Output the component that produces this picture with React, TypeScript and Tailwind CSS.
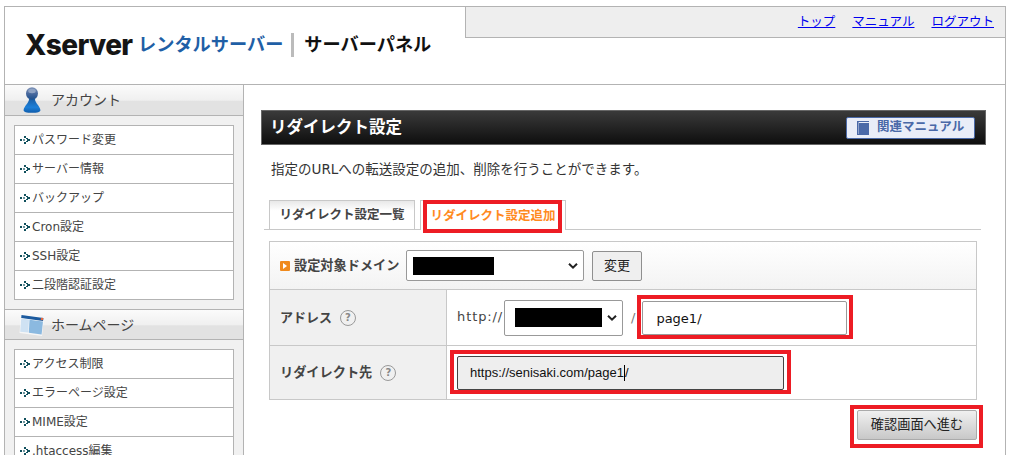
import React from 'react'

const JP = { fontFamily: '"DejaVu Sans", "Noto Sans CJK JP", sans-serif' }

const accountMenu = ['パスワード変更', 'サーバー情報', 'バックアップ', 'Cron設定', 'SSH設定', '二段階認証設定']
const homepageMenu = ['アクセス制限', 'エラーページ設定', 'MIME設定', '.htaccess編集']

function Bullet() {
  return (
    <svg width="11" height="9" viewBox="0 0 11 9" className="shrink-0" shapeRendering="crispEdges">
      <g fill="#0f4f5c">
        <rect x="0" y="3" width="2" height="2" />
        <rect x="3" y="3" width="2" height="2" opacity="0.6" />
        <rect x="4" y="0" width="2" height="2" />
        <rect x="4" y="6" width="2" height="2" />
        <rect x="6" y="2" width="2" height="1" />
        <rect x="6" y="5" width="2" height="1" />
        <rect x="7" y="3" width="3" height="2" />
      </g>
    </svg>
  )
}

function UserIcon() {
  return (
    <svg width="18" height="26" viewBox="0 0 18 26">
      <defs>
        <linearGradient id="userBody" x1="0" y1="0" x2="0" y2="1">
          <stop offset="0" stopColor="#1a5fa8" />
          <stop offset="0.6" stopColor="#1c7fd8" />
          <stop offset="1" stopColor="#0f5cab" />
        </linearGradient>
        <linearGradient id="userHead" x1="0" y1="0" x2="0" y2="1">
          <stop offset="0" stopColor="#7f93b8" />
          <stop offset="0.5" stopColor="#4a6a9e" />
          <stop offset="1" stopColor="#1c4f8c" />
        </linearGradient>
      </defs>
      <path d="M6 12C6 16 1 19 .6 23c-.2 2 3 2.8 8.4 2.8s8.6-.8 8.4-2.8C17 19 12 16 12 12z" fill="url(#userBody)" />
      <ellipse cx="9" cy="6.5" rx="6" ry="6.2" fill="url(#userHead)" />
      <ellipse cx="9" cy="4" rx="3.8" ry="2.2" fill="#8fa3c4" />
    </svg>
  )
}

function WindowIcon() {
  return (
    <svg width="26" height="24" viewBox="0 0 26 24">
      <path d="M2 1.5 25 4.5 23 23 0.5 20z" fill="#fff" opacity="0.7" />
      <path d="M2.5 2 24.5 5 24 8 2.2 5z" fill="#1c5a9e" />
      <circle cx="23" cy="6" r="1.3" fill="#e8663c" />
      <path d="M2.2 5.5 10 6.6 9.2 19.6 1.2 18.8z" fill="#cfe2f3" />
      <path d="M10.5 6.8 24 8.5 22.6 21.6 9.8 19.8z" fill="#8bb9e0" />
    </svg>
  )
}

function BookIcon() {
  return (
    <svg width="13" height="14" viewBox="0 0 13 14" shapeRendering="crispEdges">
      <rect x="0" y="0" width="12" height="14" fill="#4a69a8" />
      <rect x="2" y="1" width="10" height="1" fill="#e9edf8" />
      <rect x="1" y="1" width="1" height="12" fill="#8ea2cb" />
    </svg>
  )
}

function Chevron() {
  return (
    <svg width="10" height="7" viewBox="0 0 10 7" className="absolute top-1/2 right-[5px] -translate-y-1/2">
      <path d="M1 1.2 5 5.2 9 1.2" fill="none" stroke="#222" strokeWidth="2" />
    </svg>
  )
}

function HelpIcon() {
  return (
    <span className="ml-[8px] flex h-4 w-4 items-center justify-center rounded-full border border-[#999] text-[10px] font-bold leading-none text-[#888]">
      ?
    </span>
  )
}

function RedBox({ inset }: { inset: string }) {
  return <span className={`pointer-events-none absolute border-[4px] border-[#ed1c24] ${inset}`} />
}

function SideSection({ title, icon, items, head }: { title: string; icon: React.ReactNode; items: string[]; head: string }) {
  return (
    <div>
      <div className={`flex items-center border-b border-[#b3b3b3] bg-[linear-gradient(#fbfbfb,#f0f0f0_50%,#e2e2e2_55%,#e2e2e2)] ${head}`}>
        <span className="flex w-[46px] shrink-0 justify-center pl-[8px]">{icon}</span>
        <span className="text-[14px] text-[#444]">{title}</span>
      </div>
      <div className="p-[9px]">
        <ul className="border border-b-0 border-[#b3b3b3] bg-white">
          {items.map((item) => (
            <li key={item} className="flex h-[29px] items-center gap-[1px] border-b border-[#b3b3b3] pl-[5px] text-[12px] text-[#444]">
              <Bullet />
              {item}
            </li>
          ))}
        </ul>
      </div>
    </div>
  )
}

export default function App() {
  return (
    <div className="h-[455px] w-[1013px] overflow-hidden bg-white pt-[6px] pl-[4px]" style={JP}>
      <div className="w-[1002px] border-x border-t border-[#b3b3b3]">
        {/* ヘッダー */}
        <header className="flex h-[78px] border-b border-[#b3b3b3]">
          <div className="flex flex-1 items-center pb-[1px] pl-[20px]">
            <span className="mr-[3px] w-[110px] font-['Inter',sans-serif] text-[28px] leading-none font-extrabold tracking-[-0.6px] text-[#151515]">
              Xserver
            </span>
            <span className="text-[18.2px] leading-none font-bold text-[#1f5fa6]">レンタルサーバー</span>
            <span className="mx-[8px] h-[24px] w-[3px] bg-[#bbb]" />
            <span className="ml-[2px] text-[18.2px] leading-none font-bold text-[#111]">サーバーパネル</span>
          </div>
          <nav className="flex h-[31px] w-[540px] items-center justify-end gap-[17px] border-b border-l border-[#b3b3b3] bg-[#eeeeee] pr-[11px] text-[12.5px] text-[#0000ee]">
            <a className="underline">トップ</a>
            <a className="underline">マニュアル</a>
            <a className="underline">ログアウト</a>
          </nav>
        </header>

        <div className="flex">
          {/* サイドバー */}
          <aside className="h-[370px] w-[239px] shrink-0 border-r border-[#b3b3b3] bg-[#f1f1f1]">
            <SideSection title="アカウント" icon={<UserIcon />} items={accountMenu} head="h-[31px]" />
            <div className="border-t border-[#b3b3b3]">
              <SideSection title="ホームページ" icon={<WindowIcon />} items={homepageMenu} head="h-[30px] pt-[1px]" />
            </div>
          </aside>

          {/* メイン */}
          <main className="flex-1 pt-[25px] pl-[17px]">
            <div className="flex h-[35px] w-[725px] items-center justify-between border border-[#666] bg-[linear-gradient(#3a3a3a,#0e0e0e)] pr-[10px] pl-[8px]">
              <h1 className="pt-[1px] text-[16.5px] font-bold text-white">リダイレクト設定</h1>
              <div className="flex h-[22px] w-[129px] items-center gap-[7px] rounded-[2px] border border-[#4a69a8] bg-[#e9edf8] pl-[10px] text-[12.5px] font-bold text-[#4a69a8]">
                <BookIcon />
                関連マニュアル
              </div>
            </div>

            <p className="mt-[16px] ml-[10px] text-[13.5px] leading-[16px] text-[#333]">
              指定のURLへの転送設定の追加、削除を行うことができます。
            </p>

            {/* タブ */}
            <div className="mt-[23px] ml-[3px] flex h-[30px] w-[717px] items-end gap-[5px] border-b border-[#c8c8c8] pl-[5px]">
              <div className="flex h-[29px] w-[146px] items-center justify-center border border-b-0 border-[#c8c8c8] bg-[linear-gradient(#e8e8e8,#fff_35%)] pt-[1px] text-[12.5px] font-bold text-[#444]">
                リダイレクト設定一覧
              </div>
              <div className="relative z-10 -mb-px flex h-[30px] w-[146px] items-center justify-center border border-b-0 border-[#c8c8c8] bg-white pt-[1px] text-[12.5px] font-bold text-[#ff8a1e]">
                リダイレクト設定追加
                <RedBox inset="-top-[1px] left-[2px] right-[3px] -bottom-[3px]" />
              </div>
            </div>

            {/* フォーム */}
            <div className="mt-[11px] ml-[8px] w-[708px] border border-[#c8c8c8] text-[13px] text-[#444]">
              <div className="flex h-[48px] items-center border-b border-[#c8c8c8] bg-[linear-gradient(#fff,#f3f3f3)] pl-[10px]">
                <span className="mr-[4px] flex h-[10px] w-[10px] items-center justify-center rounded-[1px] bg-[#f08a1c]">
                  <span className="h-0 w-0 border-y-[3px] border-l-[4px] border-y-transparent border-l-white" />
                </span>
                <span className="w-[106px] text-[13.2px] font-bold whitespace-nowrap">設定対象ドメイン</span>
                <div className="relative ml-[6px] flex h-[31px] w-[178px] items-center rounded-[2px] border border-[#999] bg-white">
                  <span className="ml-[6px] h-[18px] w-[81px] bg-black" />
                  <Chevron />
                </div>
                <button className="ml-[8px] h-[30px] w-[50px] rounded-[2px] border border-[#8f8f8f] bg-[#efefef] text-[13px] text-[#222]">
                  変更
                </button>
              </div>

              <div className="flex h-[56px] border-b border-[#c8c8c8]">
                <div className="flex w-[177px] shrink-0 items-center border-r border-[#c8c8c8] bg-[#f0f0f0] pt-[1px] pl-[10px] font-bold">
                  アドレス
                  <HelpIcon />
                </div>
                <div className="flex flex-1 items-center pl-[10px]">
                  <span className="w-[47px] pb-[1px] tracking-[0.9px]">http://</span>
                  <div className="relative flex h-[36px] w-[119px] items-center rounded-[2px] border border-[#999] bg-white">
                    <span className="ml-[10px] h-[19px] w-[87px] bg-black" />
                    <Chevron />
                  </div>
                  <span className="mr-[7px] ml-[8px] text-[#777]">/</span>
                  <div className="relative flex h-[34px] w-[205px] items-center rounded-[2px] border border-[#999] bg-white pt-[3px] pl-[13px] text-[13px] text-[#111]">
                    page1/
                    <RedBox inset="-top-[7px] -left-[6px] -right-[7px] -bottom-[5px]" />
                  </div>
                </div>
              </div>

              <div className="flex h-[53px]">
                <div className="flex w-[177px] shrink-0 items-center border-r border-[#c8c8c8] bg-[#f0f0f0] pt-[1px] pl-[10px] text-[13.2px] font-bold">
                  リダイレクト先
                  <HelpIcon />
                </div>
                <div className="flex flex-1 items-center pl-[10px]">
                  <div className="relative flex h-[34px] w-[327px] items-center rounded-[2px] border border-[#444] bg-[#eeeeee] pl-[12px] font-['Liberation_Sans',sans-serif] text-[13px] text-[#111]">
                    https://senisaki.com/page1
                    <span className="h-[16px] w-px bg-black" />
                    /
                    <RedBox inset="-top-[7px] -left-[8px] -right-[8px] -bottom-[5px]" />
                  </div>
                </div>
              </div>
            </div>

            <div className="mt-[10px] ml-[596px]">
              <button className="relative h-[30px] w-[120px] rounded-[2px] border border-[#aaa] bg-[linear-gradient(#f0f0f0,#c8c8c8)] text-[13.2px] text-[#222]">
                確認画面へ進む
                <RedBox inset="-top-[6px] -left-[8px] -right-[7px] -bottom-[9px]" />
              </button>
            </div>
          </main>
        </div>
      </div>
    </div>
  )
}
